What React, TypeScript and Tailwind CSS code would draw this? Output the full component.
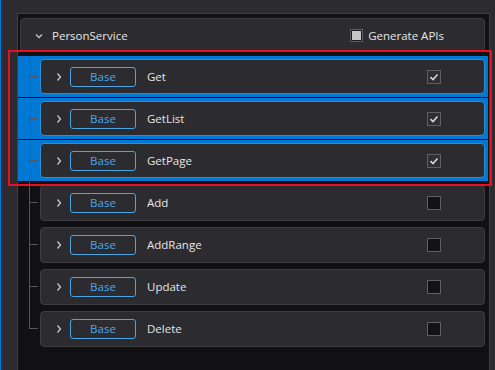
import React from "react";

const methods = [
	{ name: "Get", selected: true, checked: true },
	{ name: "GetList", selected: true, checked: true },
	{ name: "GetPage", selected: true, checked: true },
	{ name: "Add", selected: false, checked: false },
	{ name: "AddRange", selected: false, checked: false },
	{ name: "Update", selected: false, checked: false },
	{ name: "Delete", selected: false, checked: false },
];

const ChevronDown = () => (
	<svg width="8" height="6" viewBox="0 0 8 6" className="shrink-0">
		<path d="M1 1.5 L4 4.5 L7 1.5" fill="none" stroke="#c8c8c8" strokeWidth="1.3" />
	</svg>
);

const ChevronRight = () => (
	<svg width="6" height="10" viewBox="0 0 6 10" className="shrink-0">
		<path d="M1.5 1.5 L4.5 5 L1.5 8.5" fill="none" stroke="#c8c8c8" strokeWidth="1.3" />
	</svg>
);

const CheckBox = ({ checked }: { checked: boolean }) => (
	<div
		className={`w-[14px] h-[14px] border border-[#5f5f63] flex items-center justify-center ${
			checked ? "bg-[#2f2f34]" : "bg-[#131315]"
		}`}
	>
		{checked && (
			<svg width="10" height="10" viewBox="0 0 10 10">
				<path d="M1.5 5.2 L4 7.5 L8.5 2.5" fill="none" stroke="#d6d6d6" strokeWidth="1.6" />
			</svg>
		)}
	</div>
);

const MethodRow = ({
	name,
	selected,
	checked,
	last,
}: {
	name: string;
	selected: boolean;
	checked: boolean;
	last: boolean;
}) => (
	<div
		className={`flex h-[42px] mr-px ${
			selected ? "bg-[#0078d4] border-b border-[#0b0b0d]" : ""
		}`}
	>
		<div className="w-[22px] flex flex-col pl-[11px]">
			<div className="h-[21px] w-[9px] border-l border-b border-[#55555a]" />
			<div className={`flex-1 ${last ? "" : "border-l border-[#55555a]"}`} />
		</div>
		<div
			className={`flex-1 my-[3px] mr-[3px] rounded-[4px] flex items-center pl-[15px] bg-[#2b2b30] border ${
				selected ? "border-[#2b8fd6]" : "border-[#3c3c41]"
			}`}
		>
			<ChevronRight />
			<div className="ml-[8px] w-[66px] h-[20px] rounded-[3px] border border-[#4aa5e2] flex items-center justify-center text-[#4ea8e8]">
				Base
			</div>
			<span className="ml-[11px] text-[#e6e6e6]">{name}</span>
			<div className="ml-auto mr-[43px]">
				<CheckBox checked={checked} />
			</div>
		</div>
	</div>
);

export default function App() {
	return (
		<div
			className="relative w-[495px] h-[370px] overflow-hidden bg-[#2b2b30] border-l border-[#0078d4] pl-[16px] pt-[13px] pr-[5px] flex text-[11.5px]"
			style={{ fontFamily: '"Open Sans", "Noto Sans", sans-serif' }}
		>
			<div className="flex-1 flex flex-col bg-[#111113] border-l border-t border-r border-[#3e3e44]">
				<div className="mt-[4px] ml-[2px] mr-[4px] h-[34px] rounded-[4px] bg-[#2b2b30] border border-[#3c3c41] flex items-center pl-[14px] pt-px">
					<ChevronDown />
					<span className="ml-[9px] text-[#e6e6e6]">PersonService</span>
					<div className="ml-auto mr-[40px] flex items-center">
						<div className="w-[13px] h-[13px] border border-[#5e5e62] bg-[#1c1c1e] flex items-center justify-center">
							<div className="w-[9px] h-[9px] bg-[#c6c6c6]" />
						</div>
						<span className="ml-[5px] text-[#e6e6e6]">Generate APIs</span>
					</div>
				</div>
				<div className="mt-[4px] flex flex-col">
					{methods.map((m, i) => (
						<MethodRow key={m.name} {...m} last={i === methods.length - 1} />
					))}
				</div>
			</div>
			<div className="absolute left-[7px] top-[50px] w-[484px] h-[136px] border-2 border-[#e81123] pointer-events-none" />
		</div>
	);
}
